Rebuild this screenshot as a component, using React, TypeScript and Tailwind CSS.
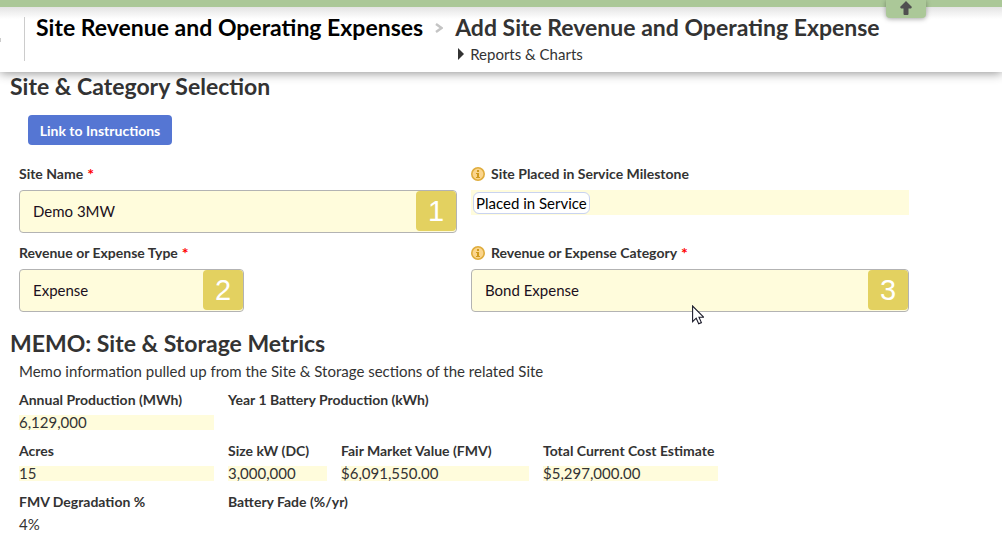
import type { ReactNode } from "react";

type Metric = { label: string; value?: string; filled?: boolean; className?: string };

const metrics: Metric[] = [
  { label: "Annual Production (MWh)", value: "6,129,000", filled: true },
  { label: "Year 1 Battery Production (kWh)", className: "col-span-3" },
  { label: "Acres", value: "15", filled: true },
  { label: "Size kW (DC)", value: "3,000,000", filled: true },
  { label: "Fair Market Value (FMV)", value: "$6,091,550.00", filled: true },
  { label: "Total Current Cost Estimate", value: "$5,297,000.00", filled: true },
  { label: "FMV Degradation %", value: "4%" },
  { label: "Battery Fade (%/yr)" },
];

function InfoIcon() {
  return (
    <svg viewBox="0 0 14 14" className="w-[14px] h-[14px] shrink-0" aria-hidden="true">
      <circle cx="7" cy="7" r="6.2" fill="#fbd58c" stroke="#dfac3c" strokeWidth="1.6" />
      <rect x="6" y="3" width="2" height="2" fill="#d09a1c" />
      <path d="M5 6h3v4h1v1H5v-1h1V7H5z" fill="#d09a1c" />
    </svg>
  );
}

function Cursor() {
  return (
    <svg viewBox="0 0 12 20" className="absolute left-[221px] top-9 w-3 h-5 pointer-events-none" aria-hidden="true">
      <path
        d="M.6 1v15.600l3.600-3.400 2.500 5.600 2.700-1.200-2.400-5.400h4.600z"
        fill="#fff"
        stroke="#1c1c2b"
        strokeWidth="1.1"
      />
    </svg>
  );
}

function FieldLabel({ id, info, required, children }: { id: string; info?: boolean; required?: boolean; children: ReactNode }) {
  return (
    <div className="flex items-center gap-[6px] h-5 mb-[6px]">
      {info && <InfoIcon />}
      <label htmlFor={id} className="flex gap-1 text-[14px] leading-5 font-bold">
        {children}
        {required && <span className="text-[16px] leading-5 text-[#ff0000]">*</span>}
      </label>
    </div>
  );
}

function SelectField({ id, value, step }: { id: string; value: string; step: string }) {
  return (
    <div className="relative">
      <select
        id={id}
        className="block w-full h-[43px] appearance-none rounded border border-[#b3b3b3] bg-[#fffcdc] pl-[13px] text-[15px] text-[#1b1020]"
      >
        <option>{value}</option>
      </select>
      <span className="absolute right-px top-px w-10 h-10 rounded-sm bg-[#e3d160] text-white text-center text-[29px] leading-10 font-['Liberation_Sans',sans-serif]">
        {step}
      </span>
    </div>
  );
}

export default function App() {
  return (
    <div className="min-h-screen overflow-hidden bg-white text-[#333333] font-['Lato',sans-serif]">
      <header className="relative shadow-[0_1px_10px_rgba(0,0,0,0.45)]">
        <div className="h-[7px] bg-[#abc898]" />
        <button
          aria-label="Collapse header"
          className="absolute right-[76px] top-0 z-10 flex w-10 h-[18px] justify-center rounded-b bg-[#abc898] shadow-[0_1px_5px_rgba(0,0,0,0.35)]"
        >
          <svg viewBox="0 0 14 16" className="w-[14px] h-4" aria-hidden="true">
            <path d="M7 1l6 6-1 1.500H9.500V14q0 1-1 1h-3q-1 0-1-1V8.500H2L1 7z" fill="#505050" />
          </svg>
        </button>
        <div className="flex h-[65px] bg-gradient-to-b from-[#e4e4e4] to-white to-[12px] pt-2">
          <span className="mt-[23px] w-px h-1 bg-[#cccccc]" />
          <span className="mt-[2px] ml-[23px] w-px h-11 shrink-0 bg-[#cccccc]" />
          <a href="#list" className="ml-[11px] text-[23px] leading-6 font-bold text-black whitespace-nowrap">
            Site Revenue and Operating Expenses
          </a>
          <svg viewBox="0 0 8 10" className="mx-3 mt-2 w-2 h-[10px] shrink-0" aria-hidden="true">
            <path d="M1 1l5.500 4L1 9" fill="none" stroke="#c4c4c4" strokeWidth="2.4" />
          </svg>
          <div className="whitespace-nowrap">
            <h1 className="text-[23px] leading-6 font-bold">Add Site Revenue and Operating Expense</h1>
            <a href="#reports" className="flex items-center gap-[6px] pl-[3px] mt-[5px] text-[15px] leading-5">
              <svg viewBox="0 0 6 12" className="w-[6px] h-3" aria-hidden="true">
                <path d="M0 0l6 6-6 6z" fill="#333" />
              </svg>
              Reports &amp; Charts
            </a>
          </div>
        </div>
      </header>

      <main className="px-[10px] max-w-[919px]">
        <section>
          <h2 className="text-[23px] leading-7 font-bold">Site &amp; Category Selection</h2>
          <button className="mt-[15px] ml-[18px] w-36 h-[30px] rounded bg-[#5576d3] text-[14px] font-bold text-white">
            Link to Instructions
          </button>
          <div className="mt-[19px] ml-[9px] grid grid-cols-2 gap-x-[14px] gap-y-[10px]">
            <div>
              <FieldLabel id="site" required>Site Name</FieldLabel>
              <SelectField id="site" value="Demo 3MW" step="1" />
            </div>
            <div>
              <FieldLabel id="milestone" info>Site Placed in Service Milestone</FieldLabel>
              <div className="flex h-[25px] items-center bg-[#fffcdc] pl-[2px]">
                <output id="milestone" className="rounded-md border border-[#c9d3f0] bg-white px-[2px] text-[15px] leading-5 text-black">
                  Placed in Service
                </output>
              </div>
            </div>
            <div>
              <FieldLabel id="type" required>Revenue or Expense Type</FieldLabel>
              <div className="w-[225px]">
                <SelectField id="type" value="Expense" step="2" />
              </div>
            </div>
            <div>
              <FieldLabel id="category" info required>Revenue or Expense Category</FieldLabel>
              <div className="relative">
                <SelectField id="category" value="Bond Expense" step="3" />
                <Cursor />
              </div>
            </div>
          </div>
        </section>

        <section className="mt-[17px]">
          <h2 className="text-[23px] leading-7 font-bold">MEMO: Site &amp; Storage Metrics</h2>
          <p className="mt-1 ml-[9px] text-[15px] leading-5">
            Memo information pulled up from the Site &amp; Storage sections of the related Site
          </p>
          <dl className="mt-[9px] ml-[9px] grid grid-cols-[195px_99px_188px_175px] gap-x-[14px] gap-y-[11px] whitespace-nowrap">
            {metrics.map((m) => (
              <div key={m.label} className={m.className}>
                <dt className="text-[14px] leading-5 font-bold">{m.label}</dt>
                {m.value && (
                  <dd className={`mt-[5px] h-[15px] text-[15px] leading-[15px] ${m.filled ? "bg-[#fffcdc]" : ""}`}>
                    {m.value}
                  </dd>
                )}
              </div>
            ))}
          </dl>
        </section>
      </main>
    </div>
  );
}
